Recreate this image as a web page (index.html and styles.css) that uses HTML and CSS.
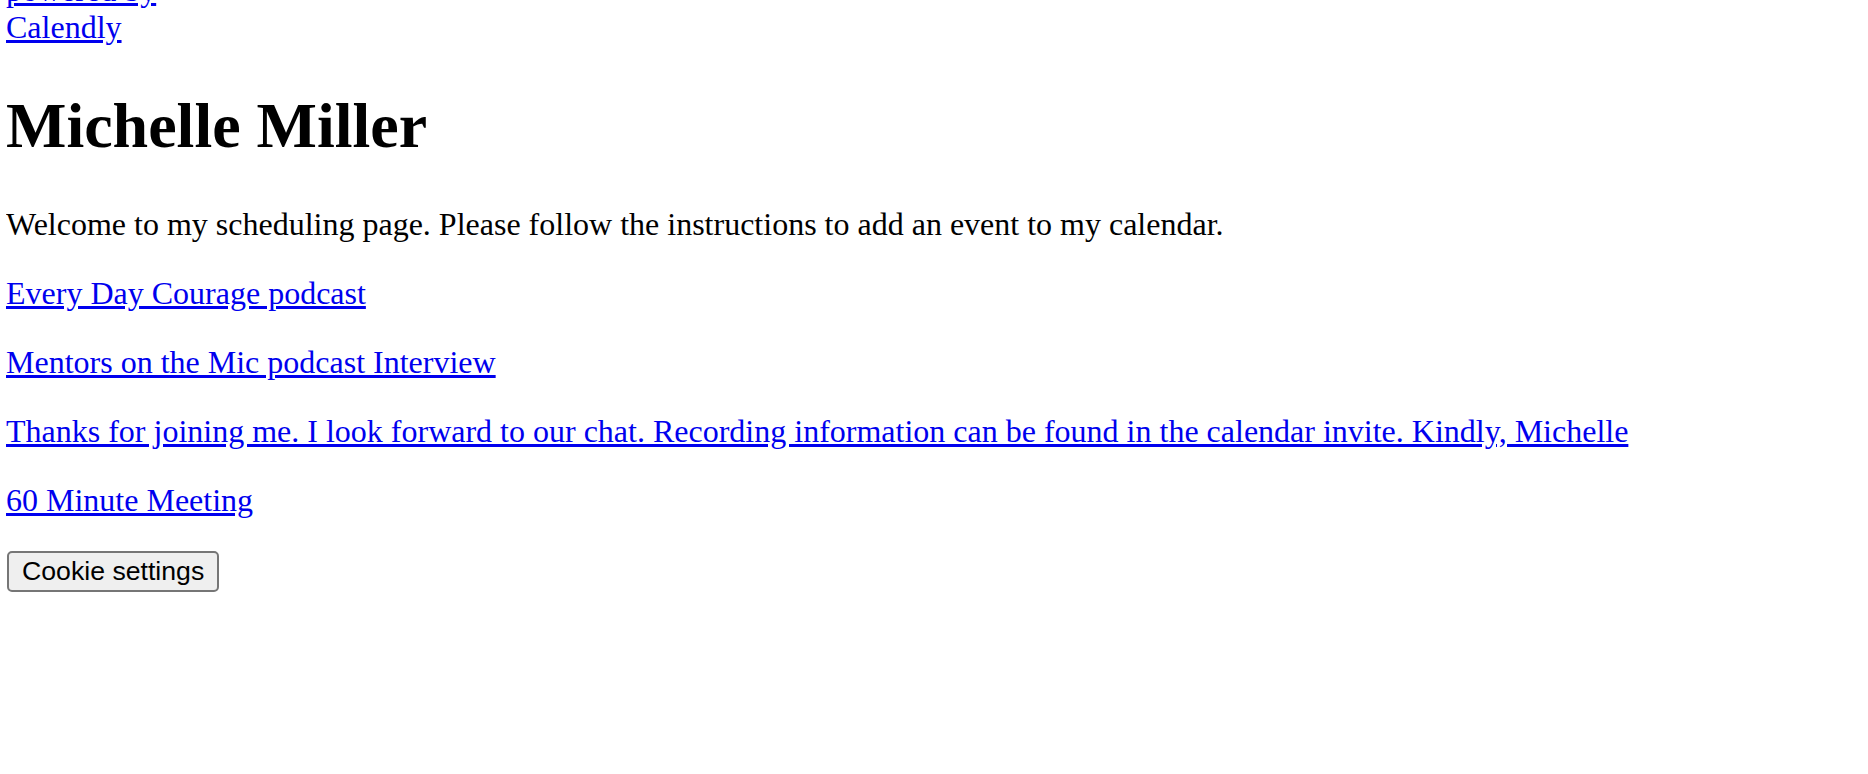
FILE: index.html
```html
<!DOCTYPE html>
<html lang="en">
<head>
<meta charset="utf-8">
<title>Michelle Miller</title>
<link rel="stylesheet" href="styles.css">
</head>
<body>
<a class="brand" href="#"><div>powered by</div><div>Calendly</div></a>
<h1 class="name">Michelle Miller</h1>
<p class="intro">Welcome to my scheduling page. Please follow the instructions to add an event to my calendar.</p>
<p><a href="#">Every Day Courage podcast</a></p>
<p><a href="#">Mentors on the Mic podcast Interview</a></p>
<p><a href="#">Thanks for joining me. I look forward to our chat. Recording information can be found in the calendar invite. Kindly, Michelle</a></p>
<p><a href="#">60 Minute Meeting</a></p>
<button class="cookie" type="button">Cookie settings</button>
</body>
</html>
```
FILE: styles.css
```css
html, body {
  background: #ffffff;
}
body {
  margin: 0 6px;
  font-family: "Liberation Serif", "Times New Roman", serif;
  font-size: 32px;
  color: #000000;
}
a {
  color: #0000ee;
}
.brand {
  display: block;
  margin-top: -28px;
}
.name {
  font-size: 64px;
  font-weight: bold;
  margin: 42.9px 0;
}
p {
  margin: 32px 0;
}
.cookie {
  font-family: "Liberation Sans", Arial, sans-serif;
  font-size: 26.67px;
  padding: 3px 13px;
  margin: 0 0 0 1px;
  border: 2px solid #767676;
  border-radius: 5px;
  background: #efefef;
  color: #000000;
}
```
